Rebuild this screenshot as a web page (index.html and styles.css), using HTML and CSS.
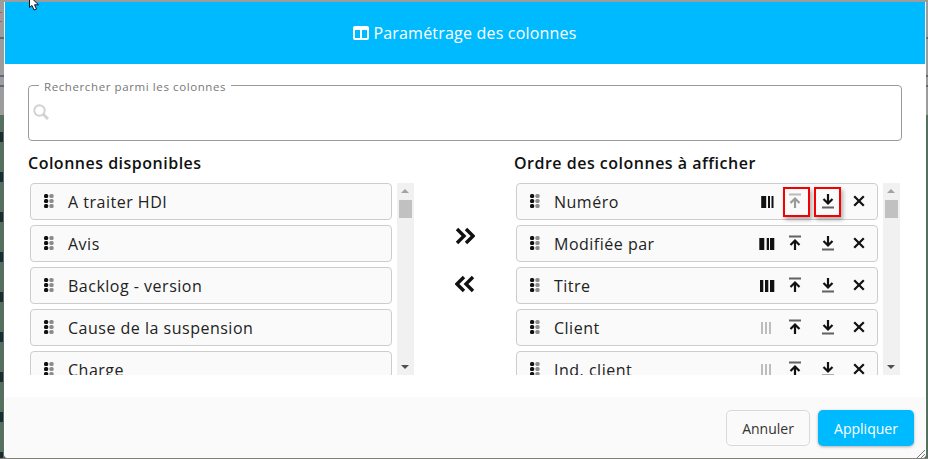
FILE: index.html
```html
<!DOCTYPE html>
<html lang="fr">
<head>
<meta charset="utf-8">
<title>Paramétrage des colonnes</title>
<link rel="stylesheet" href="styles.css">
</head>
<body>
<svg width="0" height="0" class="defs">
  <defs>
    <symbol id="grip" viewBox="0 0 10 14">
      <rect x="0" y="0" width="4.200" height="4" rx="1.500" fill="#111"/><rect x="0" y="5" width="4.200" height="4" rx="1.500" fill="#111"/><rect x="0" y="10" width="4.200" height="4" rx="1.500" fill="#111"/>
      <rect x="5.400" y="0" width="4.200" height="4" rx="1.500" fill="#8c8c8c"/><rect x="5.400" y="5" width="4.200" height="4" rx="1.500" fill="#8c8c8c"/><rect x="5.400" y="10" width="4.200" height="4" rx="1.500" fill="#8c8c8c"/>
    </symbol>
    <symbol id="up" viewBox="0 0 16 16">
      <path d="M2 1.500h12" stroke="currentColor" stroke-width="2" fill="none" opacity=".65"/>
      <path d="M8 15V6M3.500 10 8 5.500 12.500 10" stroke="currentColor" stroke-width="2.200" fill="none"/>
    </symbol>
    <symbol id="down" viewBox="0 0 16 16">
      <path d="M2 14.500h12" stroke="currentColor" stroke-width="2" fill="none" opacity=".65"/>
      <path d="M8 1v9M3.500 6 8 10.500 12.500 6" stroke="currentColor" stroke-width="2.200" fill="none"/>
    </symbol>
    <symbol id="close" viewBox="0 0 12 12">
      <path d="M1.200 1.200 10.800 10.800M10.800 1.200 1.200 10.800" stroke="currentColor" stroke-width="2.200" fill="none"/>
    </symbol>
    <symbol id="bars-first" viewBox="0 0 16 12"><path d="M2.200 0h5v12h-5zM9 0h2v12H9zM12.500 0h2v12h-2z" fill="currentColor"/></symbol>
    <symbol id="bars-mid" viewBox="0 0 16 12"><path d="M.3 0h5v12h-5zM7.700 0H10v12H7.700zM11 0h4.300v12H11z" fill="currentColor"/></symbol>
    <symbol id="bars-last" viewBox="0 0 16 12"><path d="M1 0h3.300v12H1zM6 0h3.300v12H6zM11 0h4.300v12H11z" fill="currentColor"/></symbol>
    <symbol id="bars-off" viewBox="0 0 16 12"><path d="M2 0h2v12H2zM6 0h2v12H6zM10 0h2v12h-2z" fill="currentColor"/></symbol>
  </defs>
</svg>

<div class="dialog">
  <header class="dialog-head">
    <svg class="head-icon" viewBox="0 0 16 14" width="16" height="14"><path fill-rule="evenodd" d="M2 0h12a2 2 0 0 1 2 2v10a2 2 0 0 1-2 2H2a2 2 0 0 1-2-2V2a2 2 0 0 1 2-2zM2 4v8h5V4zM9 4v8h5V4z" fill="#fff"/></svg>
    <h1 class="dialog-title">Paramétrage des colonnes</h1>
  </header>

  <main class="dialog-body">
    <fieldset class="search">
      <legend class="search-label">Rechercher parmi les colonnes</legend>
      <svg class="search-icon" viewBox="0 0 16 16" width="16" height="16"><circle cx="6.500" cy="6.500" r="5.200" fill="none" stroke="#d2d2d2" stroke-width="2"/><path d="M10.500 10.500 15 15" stroke="#d2d2d2" stroke-width="3"/></svg>
    </fieldset>

    <div class="columns">
      <section class="col">
        <h2 class="col-title">Colonnes disponibles</h2>
        <div class="list-wrap">
          <ul class="list">
            <li class="item"><svg class="grip"><use href="#grip"/></svg><span class="label">A traiter HDI</span></li>
            <li class="item"><svg class="grip"><use href="#grip"/></svg><span class="label">Avis</span></li>
            <li class="item"><svg class="grip"><use href="#grip"/></svg><span class="label">Backlog - version</span></li>
            <li class="item"><svg class="grip"><use href="#grip"/></svg><span class="label">Cause de la suspension</span></li>
            <li class="item"><svg class="grip"><use href="#grip"/></svg><span class="label">Charge</span></li>
          </ul>
          <div class="scrollbar"><i class="arrow-up"></i><b class="thumb"></b><i class="arrow-down"></i></div>
        </div>
      </section>

      <div class="transfer">
        <svg class="chev" viewBox="0 0 20 18" width="20" height="18"><path d="M2 2 9 9 2 16M11 2 18 9 11 16" fill="none" stroke="#111" stroke-width="3.400"/></svg>
        <svg class="chev" viewBox="0 0 20 18" width="20" height="18"><path d="M9 2 2 9 9 16M18 2 11 9 18 16" fill="none" stroke="#111" stroke-width="3.400"/></svg>
      </div>

      <section class="col">
        <h2 class="col-title">Ordre des colonnes à afficher</h2>
        <div class="list-wrap">
          <ul class="list">
            <li class="item"><svg class="grip"><use href="#grip"/></svg><span class="label">Numéro</span>
              <span class="tools">
                <svg class="tool bars"><use href="#bars-first"/></svg>
                <span class="tool-box tool-up hl"><svg class="tool arrow muted"><use href="#up"/></svg></span>
                <span class="tool-box hl"><svg class="tool arrow"><use href="#down"/></svg></span>
                <svg class="tool x"><use href="#close"/></svg>
              </span></li>
            <li class="item"><svg class="grip"><use href="#grip"/></svg><span class="label">Modifiée par</span>
              <span class="tools">
                <svg class="tool bars"><use href="#bars-mid"/></svg>
                <span class="tool-box tool-up"><svg class="tool arrow"><use href="#up"/></svg></span>
                <span class="tool-box"><svg class="tool arrow"><use href="#down"/></svg></span>
                <svg class="tool x"><use href="#close"/></svg>
              </span></li>
            <li class="item"><svg class="grip"><use href="#grip"/></svg><span class="label">Titre</span>
              <span class="tools">
                <svg class="tool bars"><use href="#bars-last"/></svg>
                <span class="tool-box tool-up"><svg class="tool arrow"><use href="#up"/></svg></span>
                <span class="tool-box"><svg class="tool arrow"><use href="#down"/></svg></span>
                <svg class="tool x"><use href="#close"/></svg>
              </span></li>
            <li class="item"><svg class="grip"><use href="#grip"/></svg><span class="label">Client</span>
              <span class="tools">
                <svg class="tool bars off"><use href="#bars-off"/></svg>
                <span class="tool-box tool-up"><svg class="tool arrow"><use href="#up"/></svg></span>
                <span class="tool-box"><svg class="tool arrow"><use href="#down"/></svg></span>
                <svg class="tool x"><use href="#close"/></svg>
              </span></li>
            <li class="item"><svg class="grip"><use href="#grip"/></svg><span class="label">Ind. client</span>
              <span class="tools">
                <svg class="tool bars off"><use href="#bars-off"/></svg>
                <span class="tool-box tool-up"><svg class="tool arrow"><use href="#up"/></svg></span>
                <span class="tool-box"><svg class="tool arrow"><use href="#down"/></svg></span>
                <svg class="tool x"><use href="#close"/></svg>
              </span></li>
          </ul>
          <div class="scrollbar"><i class="arrow-up"></i><b class="thumb"></b><i class="arrow-down"></i></div>
        </div>
      </section>
    </div>
  </main>

  <footer class="dialog-foot">
    <button class="btn btn-cancel" type="button">Annuler</button>
    <button class="btn btn-apply" type="button">Appliquer</button>
  </footer>
  <svg class="resize" viewBox="0 0 9 9" width="9" height="9"><path d="M1 9 9 1M5 9 9 5" stroke="#777" stroke-width="1"/></svg>
</div>

<svg class="cursor" viewBox="0 0 12 11" width="12" height="11"><path d="M1.500-4 1.500 7.500 4 5.500 6 10 8.500 9 6.500 4.800 10.500 4.800z" fill="#fff" stroke="#111" stroke-width="1"/></svg>
</body>
</html>
```

FILE: styles.css
```css
* { box-sizing: border-box; }
html, body { margin: 0; height: 100%; }
body {
  width: 928px;
  height: 459px;
  overflow: hidden;
  position: relative;
  padding: 2px 2px 1px 4px;
  font-family: "Open Sans", "Liberation Sans", sans-serif;
  color: #222;
  background:
    linear-gradient(#7f8078, #7f8078) 0 458px / 100% 1px no-repeat,
    repeating-linear-gradient(#0000 0 5px, #1c2a33 5px 15px, #0000 15px 40px) 0 127px / 3px 332px no-repeat,
    linear-gradient(#0000 0 12px, #c85050 12px 13px, #0000 13px 21px, #c85050 21px 22px, #0000 22px) 0 0 / 2px 30px no-repeat,
    linear-gradient(#0000 0 37px, #5a6a80 37px 39px, #0000 39px 75px, #5a6a80 75px 77px, #0000 77px 85px, #5a6a80 85px 87px, #0000 87px) 0 0 / 100% 100px no-repeat,
    linear-gradient(#9c9c9c 0 115px, #55705f 115px) 0 0 / 100% 100% no-repeat;
}
.defs { position: absolute; }

.dialog {
  position: relative;
  display: flex;
  flex-direction: column;
  height: 456px;
  width: 922px;
  background: #fff;
  border-left: 1px solid #fff;
  border-right: 1px solid #fff;
  border-radius: 0 0 4px 4px;
  overflow: hidden;
}
.dialog-head {
  flex: none;
  height: 62px;
  background: #00baff;
  display: flex;
  align-items: center;
  justify-content: center;
  gap: 4px;
}
.head-icon { display: block; }
.dialog-title {
  margin: 0;
  font-size: 16px;
  font-weight: 500;
  letter-spacing: .2px;
  color: #fff;
}

.dialog-body {
  flex: 1;
  padding: 15px 23px 0;
}
.search {
  margin: 0;
  height: 62px;
  padding: 0 0 8px 4px;
  border: 1px solid #9a9a9a;
  border-radius: 4px;
  display: flex;
  align-items: center;
}
.search-label {
  margin-left: 6px;
  padding: 2px 5px 0;
  line-height: 11px;
  font-size: 11.500px;
  letter-spacing: .6px;
  color: #777;
}
.columns {
  display: flex;
  margin-top: 11px;
}
.col { width: 386px; flex: none; }
.col-title {
  margin: 0 0 9px;
  height: 22px;
  line-height: 22px;
  font-size: 16px;
  font-weight: 600;
  letter-spacing: .5px;
  color: #111;
}
.list-wrap {
  display: flex;
  justify-content: space-between;
  height: 192px;
  overflow: hidden;
}
.list {
  list-style: none;
  margin: 0 0 0 2px;
  padding: 0;
  width: 362px;
  display: flex;
  flex-direction: column;
  gap: 5px;
}
.item {
  flex: none;
  height: 37px;
  display: flex;
  align-items: center;
  padding-left: 13px;
  background: #fafafa;
  border: 1px solid #cdcdcd;
  border-radius: 4px;
}
.grip { width: 10px; height: 14px; flex: none; margin-top: -2px; }
.label {
  margin-left: 14px;
  font-size: 16px;
  letter-spacing: .5px;
  color: #222;
}
.tools {
  margin-left: auto;
  display: flex;
  align-items: center;
}
.tool { display: block; color: #111; }
.bars { width: 16px; height: 12px; margin-right: 8px; }
.bars.off { color: #bdbdbd; }
.tool-box {
  width: 27px;
  height: 30px;
  margin-right: 4px;
  display: flex;
  align-items: center;
  justify-content: center;
}
.tool-up { padding-right: 3px; }
.tool-box.hl {
  outline: 2px solid #f40000;
  outline-offset: -2px;
  box-shadow: 2px 3px 4px rgba(0, 0, 0, .3);
  background: #fafafa;
}
.arrow { width: 16px; height: 16px; margin-top: -2px; }
.arrow.muted { color: #9a9a9a; }
.x { width: 12px; height: 12px; margin: -2px 12px 0 8px; }

.scrollbar {
  width: 17px;
  flex: none;
  position: relative;
  background: #f1f1f1;
}
.thumb {
  position: absolute;
  left: 2px;
  top: 17px;
  width: 13px;
  height: 18px;
  background: #c1c1c1;
}
.arrow-up, .arrow-down {
  position: absolute;
  left: 4px;
  width: 0;
  height: 0;
  border-left: 4px solid transparent;
  border-right: 4px solid transparent;
}
.arrow-up { top: 6px; border-bottom: 4px solid #a3a3a3; }
.arrow-down { bottom: 6px; border-top: 4px solid #505050; }

.transfer {
  flex: none;
  width: 100px;
  display: flex;
  flex-direction: column;
  align-items: center;
  gap: 30px;
  padding: 75px 0 0 2px;
}
.chev { display: block; }

.dialog-foot {
  flex: none;
  height: 61px;
  background: #fafafa;
  display: flex;
  justify-content: flex-end;
  gap: 8px;
  padding: 13px 11px 0 0;
}
.btn {
  height: 36px;
  border-radius: 5px;
  font-family: inherit;
  font-size: 14px;
  padding: 0;
}
.btn-cancel {
  width: 84px;
  background: #fafafa;
  border: 1px solid #d9d9d9;
  color: #333;
}
.btn-apply {
  width: 96px;
  background: #00baff;
  border: 0;
  color: #fff;
  font-weight: 500;
  box-shadow: 0 1px 3px rgba(0, 0, 0, .3);
}
.resize { position: absolute; right: 0; bottom: 0; }
.cursor { position: absolute; left: 28px; top: 0; }
```
